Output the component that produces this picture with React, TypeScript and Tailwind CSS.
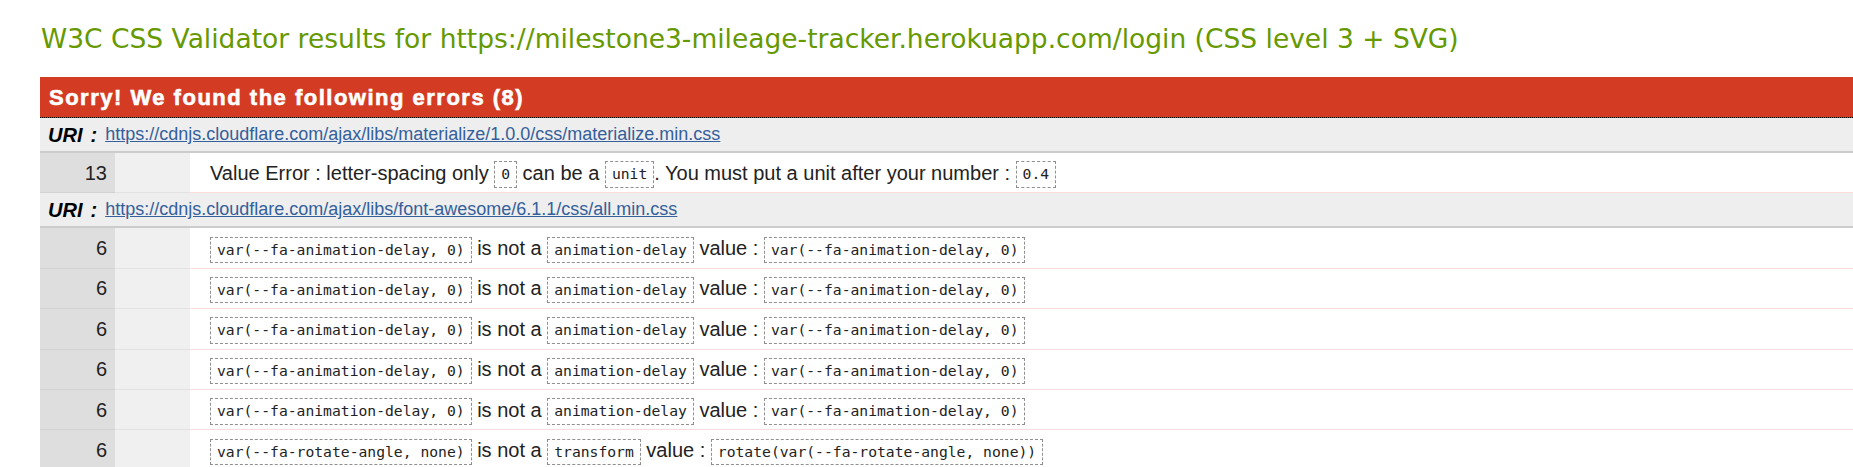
import React from "react";

const Code = ({ children }: { children: React.ReactNode }) => (
  <span className="inline-block align-middle border border-dashed border-[#8f8f8f] px-[6px] leading-[24.5px] text-[14.7px] text-[#222] font-['DejaVu_Sans_Mono','Liberation_Mono',monospace]">
    {children}
  </span>
);

type Row = { line: string; content: React.ReactNode };

const Line = ({ line, content }: Row) => (
  <div className="grid grid-cols-[75px_75px_1fr] h-[40.4px]">
    <div className="bg-[#dedede] border-b border-[#d2d2d2] flex items-center justify-end pr-[8px] text-[20px] text-[#222]">
      {line}
    </div>
    <div className="bg-[#f0f0f0] border-b border-[#e2e2e2]" />
    <div className="bg-white border-b border-[#fddcdc] flex items-center pl-[20px] text-[20px] text-[#222] whitespace-nowrap">
      <span>{content}</span>
    </div>
  </div>
);

const Uri = ({ href }: { href: string }) => (
  <div className="bg-[#eeeeee] h-[35px] border-b-2 border-[#cccccc] flex items-center pl-[8px] whitespace-nowrap">
    <span className="font-bold italic text-[20px] text-black">URI</span>
    <span className="font-bold italic text-[20px] text-black ml-[8px]">:</span>
    <a className="ml-[8px] text-[18px] text-[#34609c] underline" href="#">
      {href}
    </a>
  </div>
);

const delayRow = (
  <>
    <Code>var(--fa-animation-delay, 0)</Code> is not a <Code>animation-delay</Code> value : <Code>var(--fa-animation-delay, 0)</Code>
  </>
);

export default function App() {
  return (
    <div className="h-[467px] overflow-hidden bg-white font-['Liberation_Sans',Arial,sans-serif]">
      <h2 className="pt-[23px] pl-[41px] text-[26.5px] leading-[31px] text-[#669900] font-['DejaVu_Sans',Verdana,sans-serif] font-normal whitespace-nowrap">
        W3C CSS Validator results for https://milestone3-mileage-tracker.herokuapp.com/login (CSS level 3 + SVG)
      </h2>
      <div className="ml-[40px] mt-[23px]">
        <div className="bg-[#d33c23] h-[41px] border-b border-dotted border-black flex items-center pl-[9px]">
          <span className="text-white font-bold text-[22px] tracking-[1.5px] [-webkit-text-stroke:0.6px_white] whitespace-nowrap">
            Sorry! We found the following errors (8)
          </span>
        </div>
        <Uri href="https://cdnjs.cloudflare.com/ajax/libs/materialize/1.0.0/css/materialize.min.css" />
        <Line
          line="13"
          content={
            <>
              Value Error : letter-spacing only <Code>0</Code> can be a <Code>unit</Code>. You must put a unit after your number : <Code>0.4</Code>
            </>
          }
        />
        <Uri href="https://cdnjs.cloudflare.com/ajax/libs/font-awesome/6.1.1/css/all.min.css" />
        <Line line="6" content={delayRow} />
        <Line line="6" content={delayRow} />
        <Line line="6" content={delayRow} />
        <Line line="6" content={delayRow} />
        <Line line="6" content={delayRow} />
        <Line
          line="6"
          content={
            <>
              <Code>var(--fa-rotate-angle, none)</Code> is not a <Code>transform</Code> value : <Code>rotate(var(--fa-rotate-angle, none))</Code>
            </>
          }
        />
      </div>
    </div>
  );
}
